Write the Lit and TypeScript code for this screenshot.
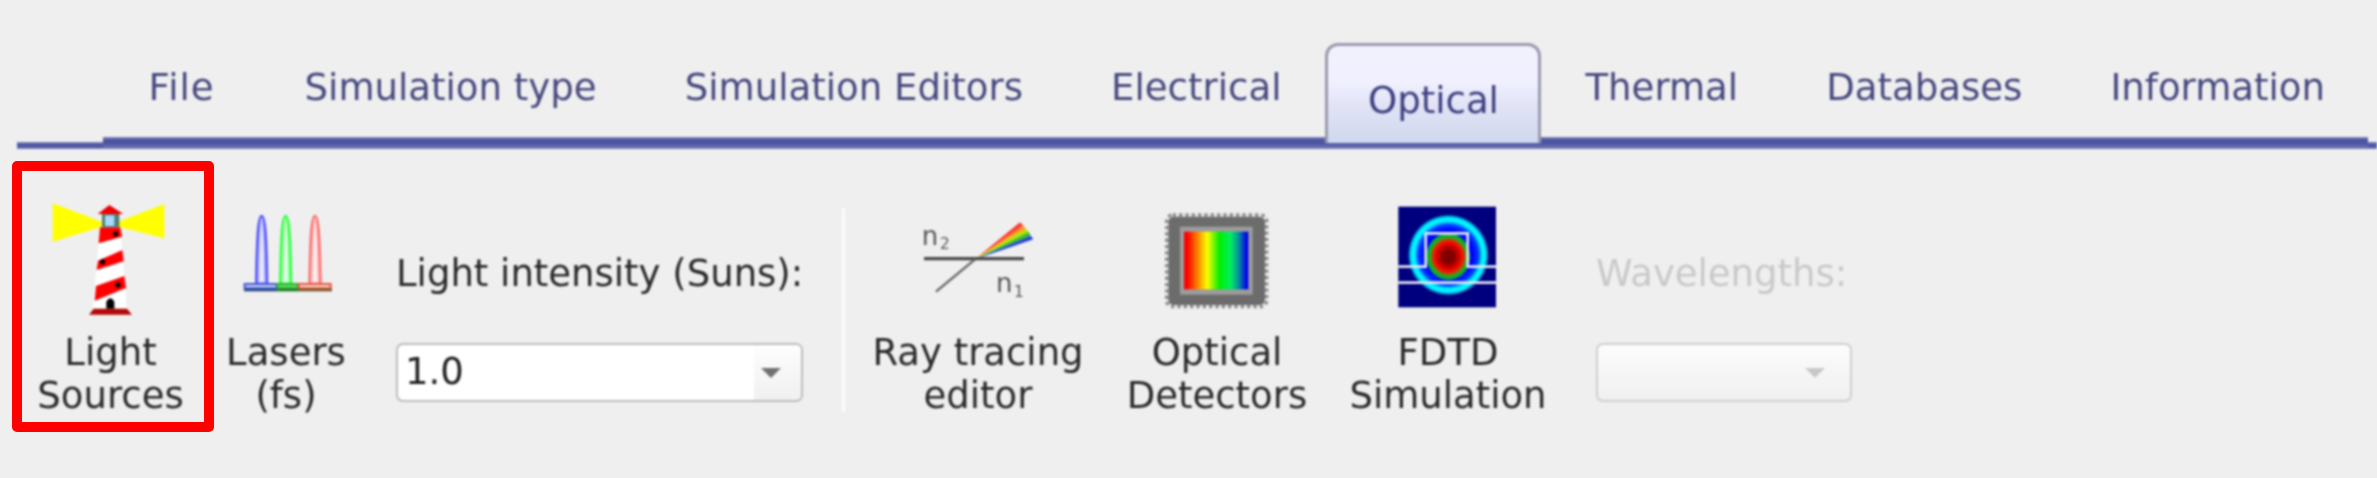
import { LitElement, html, css, svg } from "lit";
import { customElement } from "lit/decorators.js";

const lighthouse = svg`<g transform="translate(-20,-9) scale(.33333)">
  <polygon points="65,40 212,95 212,110 65,155" fill="#ffff00"/>
  <polygon points="262,95 400,42 400,145 262,110" fill="#ffff00"/>
  <polygon points="208,110 268,110 287,355 185,355" fill="#fff"/>
  <polygon points="207,112 268,112 273,140 203,160" fill="#f00"/>
  <polygon points="201,212 274,180 278,214 197,240" fill="#f00"/>
  <polygon points="195,288 280,258 285,294 191,332" fill="#f00"/>
  <rect x="213" y="72" width="52" height="40" fill="#4f7f70"/>
  <rect x="222" y="76" width="28" height="32" fill="#a8d8ff"/>
  <polygon points="200,72 235,45 277,72" fill="#f00000"/>
  <circle cx="254" cy="132" r="8" fill="#200"/>
  <circle cx="215" cy="215" r="8" fill="#100"/>
  <circle cx="261" cy="285" r="8" fill="#100"/>
  <path d="M226 356 V335 Q238 315 250 335 V356Z" fill="#000"/>
  <polygon points="188,356 288,356 303,374 174,374" fill="#b50808"/>
</g>`;

const peak = (cx: number, c: string, light: string) => svg`
  <path d="M${cx - 16} 252 C${cx - 14} 120 ${cx - 11} 48 ${cx} 48 C${cx + 11} 48 ${cx + 14} 120 ${cx + 16} 252Z" fill="${light}" stroke="${c}" stroke-width="8"/>
  <path d="M${cx - 4} 245 C${cx - 3} 150 ${cx - 2} 90 ${cx} 75 C${cx + 2} 90 ${cx + 3} 150 ${cx + 4} 245Z" fill="#fff" opacity=".8"/>`;

const lasers = svg`<g transform="translate(-6,1) scale(.33333)">
  ${peak(125, "#5555ff", "#c8c8ff")}
  ${peak(197, "#33ff44", "#b0ffb8")}
  ${peak(285, "#ff7070", "#ffd0d0")}
  <rect x="74" y="252" width="96" height="13" fill="#c8ccf8" stroke="#4058d0" stroke-width="6"/>
  <rect x="172" y="252" width="62" height="13" fill="#60e060" stroke="#28b030" stroke-width="6"/>
  <rect x="236" y="252" width="96" height="13" fill="#ffd0c8" stroke="#e05840" stroke-width="6"/>
  <rect x="72" y="266" width="100" height="8" fill="#2c4a88"/>
  <rect x="172" y="266" width="62" height="8" fill="#1f7a28"/>
  <rect x="234" y="266" width="102" height="8" fill="#7a5a30"/>
</g>`;

const ray = svg`<g transform="translate(-98,-19) scale(.33333)">
  <polygon points="465,238 600,127 610,137" fill="#ff3b30"/>
  <polygon points="465,238 610,137 618,146" fill="#ff9a20"/>
  <polygon points="465,238 618,146 626,156" fill="#b8e000"/>
  <polygon points="465,238 626,156 632,167" fill="#30c030"/>
  <polygon points="465,238 632,167 640,178" fill="#2840d8"/>
  <line x1="312" y1="236" x2="612" y2="236" stroke="#484848" stroke-width="10"/>
  <line x1="348" y1="335" x2="465" y2="238" stroke="#666" stroke-width="7"/>
  <text class="n" x="305" y="195">n</text><text class="s" x="360" y="206">2</text>
  <text class="n" x="528" y="335">n</text><text class="s" x="582" y="350">1</text>
</g>`;

const detector = svg`<g transform="translate(-27,1) scale(.33333)">
  <rect x="110" y="45" width="300" height="275" rx="18" fill="none" stroke="#8a8a8a" stroke-width="10" stroke-dasharray="10 9"/>
  <rect x="115" y="50" width="290" height="265" rx="16" fill="#6c6c6c"/>
  <rect x="150" y="80" width="218" height="204" fill="#9c9c9c"/>
  <rect x="162" y="95" width="193" height="173" fill="url(#spec)"/>
</g>`;

const fdtd = svg`<g transform="translate(-8,-9) scale(.33333)">
  <rect x="55" y="50" width="293" height="302" fill="#00007f"/>
  <circle cx="205" cy="195" r="122" fill="url(#ring)"/>
  <ellipse cx="205" cy="200" rx="66" ry="70" fill="url(#core)"/>
  <path d="M55 230 H137 V130 H263 V230 H348 M55 278 H348" fill="none" stroke="#e4e4f4" stroke-width="8"/>
</g>`;

const tabs = ["File", "Simulation type", "Simulation Editors", "Electrical", "Optical", "Thermal", "Databases", "Information"];

@customElement("app-root")
export class AppRoot extends LitElement {
  static styles = css`
    :host { display: block; position: relative; width: 2377px; height: 478px; overflow: hidden; background: #efefef; }
    .page {
      height: 478px;
      font-family: "DejaVu Sans", sans-serif;
      font-size: 37px;
      color: #2a2a2a;
      background: #efefef;
      filter: blur(0.8px);
    }
    .tabbar {
      display: flex;
      box-sizing: border-box;
      height: 149px;
      padding: 43px 0 6px 104.5px;
      background:
        linear-gradient(#8488c0, #474e9c 30%, #5a61aa 70%, #7f84bc) 103px 137px / 2265px 12px no-repeat,
        linear-gradient(#8a8ec4, #474e9c 40%, #5a61aa 75%, #8488c0) 17px 142px / 2360px 7px no-repeat;
    }
    .tab {
      box-sizing: border-box;
      height: 100px;
      padding: 23px 44px 0;
      font-size: 37.1px;
      line-height: 43px;
      color: #46487f;
      white-space: nowrap;
    }
    .tab:first-child { letter-spacing: 1px; padding-right: 46px; }
    .tab.sel {
      width: 216px;
      padding: 33px 0 0;
      text-align: center;
      color: #3d3f80;
      background: linear-gradient(#f2f2fe, #f0f0fe 38%, #e2e4f6 60%, #cfd8ee);
      border: 3px solid #9a9aae;
      border-bottom: 0;
      border-radius: 13px 13px 0 0;
    }
    .toolbar { display: flex; padding: 50px 0 0 12px; }
    .tool { display: flex; flex-direction: column; align-items: center; text-align: center; line-height: 43px; white-space: nowrap; }
    .tool svg { display: block; width: 120px; height: 120px; margin-bottom: 12px; overflow: visible; filter: blur(0.7px); }
    .w1 { width: 197px; }
    .w2 { width: 154px; }
    .w3 { width: 240px; }
    .w4 { width: 238px; }
    .w5 { width: 224px; }
    .field { display: flex; flex-direction: column; margin-top: 53px; }
    .f1 { width: 407px; margin-left: 33px; }
    .f2 { width: 256px; margin-left: 36px; color: #c9c9c9; }
    .field-label { line-height: 43px; height: 43px; margin-bottom: 49px; white-space: nowrap; }
    .combo {
      box-sizing: border-box;
      display: flex;
      height: 59px;
      margin-top: -1px;
      border: 2px solid #bcbcbc;
      border-radius: 7px;
      background: #fff;
      overflow: hidden;
    }
    .value { flex: 1; padding-left: 7px; line-height: 53px; color: #222; }
    .drop { box-sizing: border-box; width: 47px; padding-left: 7px; display: flex; align-items: center; background: linear-gradient(#fefefe, #f0f0f0); }
    .drop i { display: block; width: 0; height: 0; border: 10px solid transparent; border-top: 10px solid #707070; border-bottom: 0; }
    .combo.off { border-color: #cfcfcf; background: linear-gradient(#fcfcfc, #f0f0f0); }
    .combo.off .drop { background: none; width: 57px; padding-left: 12px; }
    .combo.off .drop i { border-top-color: #c8c8c8; }
    .sep { width: 3px; height: 204px; margin: 9px 0 0 39px; background: #fbfbfb; }
    .sep + .w3 { margin-left: 13px; }
    .n { font: 78px "DejaVu Sans", sans-serif; fill: #555; }
    .s { font: 46px "DejaVu Sans", sans-serif; fill: #555; }
    .defs { position: absolute; width: 0; height: 0; }
    .mark {
      position: absolute;
      left: 12px;
      top: 161px;
      width: 202px;
      height: 271px;
      box-sizing: border-box;
      border: 10px solid #ff0000;
      border-radius: 5px;
    }
  `;

  render() {
    return html`
      <div class="page">
        <svg class="defs">
          <defs>
            <linearGradient id="spec">
              <stop offset="0.05" stop-color="#ff0000"/>
              <stop offset="0.2" stop-color="#ff7a00"/>
              <stop offset="0.36" stop-color="#ffff00"/>
              <stop offset="0.55" stop-color="#00ee00"/>
              <stop offset="0.72" stop-color="#00f060"/>
              <stop offset="0.85" stop-color="#0090a0"/>
              <stop offset="0.97" stop-color="#0000e8"/>
            </linearGradient>
            <radialGradient id="ring">
              <stop offset="0.6" stop-color="#0000ff"/>
              <stop offset="0.74" stop-color="#0040ff"/>
              <stop offset="0.84" stop-color="#00ffff"/>
              <stop offset="0.92" stop-color="#00e8ff"/>
              <stop offset="1" stop-color="#00007f"/>
            </radialGradient>
            <radialGradient id="core">
              <stop offset="0.25" stop-color="#7f0000"/>
              <stop offset="0.55" stop-color="#e80000"/>
              <stop offset="0.72" stop-color="#e03000"/>
              <stop offset="0.82" stop-color="#20b020"/>
              <stop offset="1" stop-color="#00a040"/>
            </radialGradient>
          </defs>
        </svg>
        <div class="tabbar">
          ${tabs.map((t) => html`<div class="tab ${t === "Optical" ? "sel" : ""}">${t}</div>`)}
        </div>
        <div class="toolbar">
          <div class="tool w1"><svg viewBox="0 0 120 120">${lighthouse}</svg>Light<br />Sources</div>
          <div class="tool w2"><svg viewBox="0 0 120 120">${lasers}</svg>Lasers<br />(fs)</div>
          <div class="field f1">
            <div class="field-label">Light intensity (Suns):</div>
            <div class="combo"><div class="value">1.0</div><div class="drop"><i></i></div></div>
          </div>
          <div class="sep"></div>
          <div class="tool w3"><svg viewBox="0 0 120 120">${ray}</svg>Ray tracing<br />editor</div>
          <div class="tool w4"><svg viewBox="0 0 120 120">${detector}</svg>Optical<br />Detectors</div>
          <div class="tool w5"><svg viewBox="0 0 120 120">${fdtd}</svg>FDTD<br />Simulation</div>
          <div class="field f2">
            <div class="field-label">Wavelengths:</div>
            <div class="combo off"><div class="value"></div><div class="drop"><i></i></div></div>
          </div>
        </div>
      </div>
      <div class="mark"></div>
    `;
  }
}
